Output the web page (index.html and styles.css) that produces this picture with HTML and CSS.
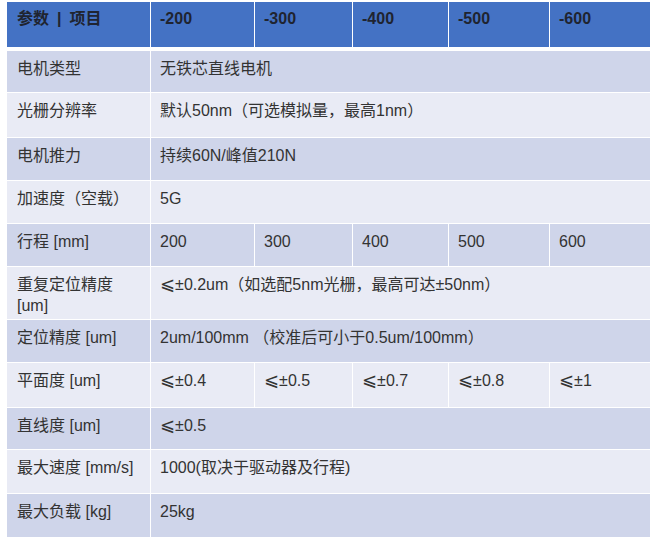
FILE: index.html
```html
<!DOCTYPE html>
<html lang="zh-CN">
<head>
<meta charset="utf-8">
<title>参数表</title>
<link rel="stylesheet" href="styles.css">
</head>
<body>
<div class="spec">
  <div class="row head">
    <div class="cell first">参数<span class="sep">|</span>项目</div>
    <div class="cell">-200</div>
    <div class="cell">-300</div>
    <div class="cell">-400</div>
    <div class="cell">-500</div>
    <div class="cell">-600</div>
  </div>
  <div class="row dark h41">
    <div class="cell first">电机类型</div>
    <div class="cell span">无铁芯直线电机</div>
  </div>
  <div class="row light h44">
    <div class="cell first">光栅分辨率</div>
    <div class="cell span">默认50nm（可选模拟量，最高1nm）</div>
  </div>
  <div class="row dark h42">
    <div class="cell first">电机推力</div>
    <div class="cell span">持续60N/峰值210N</div>
  </div>
  <div class="row light h42">
    <div class="cell first">加速度（空载）</div>
    <div class="cell span">5G</div>
  </div>
  <div class="row dark h42">
    <div class="cell first">行程 [mm]</div>
    <div class="cell">200</div>
    <div class="cell">300</div>
    <div class="cell">400</div>
    <div class="cell">500</div>
    <div class="cell">600</div>
  </div>
  <div class="row light h52">
    <div class="cell first">重复定位精度 [um]</div>
    <div class="cell span"><span class="le">⩽</span>±0.2um（如选配5nm光栅，最高可达±50nm）</div>
  </div>
  <div class="row dark h42">
    <div class="cell first">定位精度 [um]</div>
    <div class="cell span">2um/100mm （校准后可小于0.5um/100mm）</div>
  </div>
  <div class="row light h44">
    <div class="cell first">平面度 [um]</div>
    <div class="cell"><span class="le">⩽</span>±0.4</div>
    <div class="cell"><span class="le">⩽</span>±0.5</div>
    <div class="cell"><span class="le">⩽</span>±0.7</div>
    <div class="cell"><span class="le">⩽</span>±0.8</div>
    <div class="cell"><span class="le">⩽</span>±1</div>
  </div>
  <div class="row dark h41">
    <div class="cell first">直线度 [um]</div>
    <div class="cell span"><span class="le">⩽</span>±0.5</div>
  </div>
  <div class="row light h43">
    <div class="cell first">最大速度 [mm/s]</div>
    <div class="cell span">1000(取决于驱动器及行程)</div>
  </div>
  <div class="row dark h43">
    <div class="cell first">最大负载 [kg]</div>
    <div class="cell span">25kg</div>
  </div>
</div>
</body>
</html>
```

FILE: styles.css
```css
html, body {
  margin: 0;
  padding: 0;
  background: #ffffff;
}

body {
  font-family: "Liberation Sans", "Noto Sans CJK SC", "DejaVu Sans", sans-serif;
  font-size: 16px;
  line-height: 21px;
  color: #333333;
}

.spec {
  display: flex;
  flex-direction: column;
  gap: 1px;
  width: 643px;
  margin: 2px 0 0 7px;
}

.row {
  display: grid;
  grid-template-columns: 143px 103px 97px 95px 100px 100px;
  column-gap: 1px;
}

.cell {
  padding: 7px 9px 0 9px;
  box-sizing: border-box;
}

.cell.first {
  padding-left: 10px;
}

.cell.span {
  grid-column: span 5;
}

.sep {
  margin: 0 8px;
}

.le {
  font-family: "DejaVu Sans", sans-serif;
  font-size: 18px;
  line-height: 16px;
}

.head {
  height: 45px;
  margin-bottom: 3px;
}

.head .cell {
  background: #4472c4;
  color: #1f2430;
  font-weight: bold;
  padding-top: 6px;
}

.dark .cell {
  background: #cfd5ea;
}

.light .cell {
  background: #e9ebf5;
}

.h41 { height: 41px; }
.h42 { height: 42px; }
.h43 { height: 43px; }
.h44 { height: 44px; }
.h52 { height: 52px; }
```
